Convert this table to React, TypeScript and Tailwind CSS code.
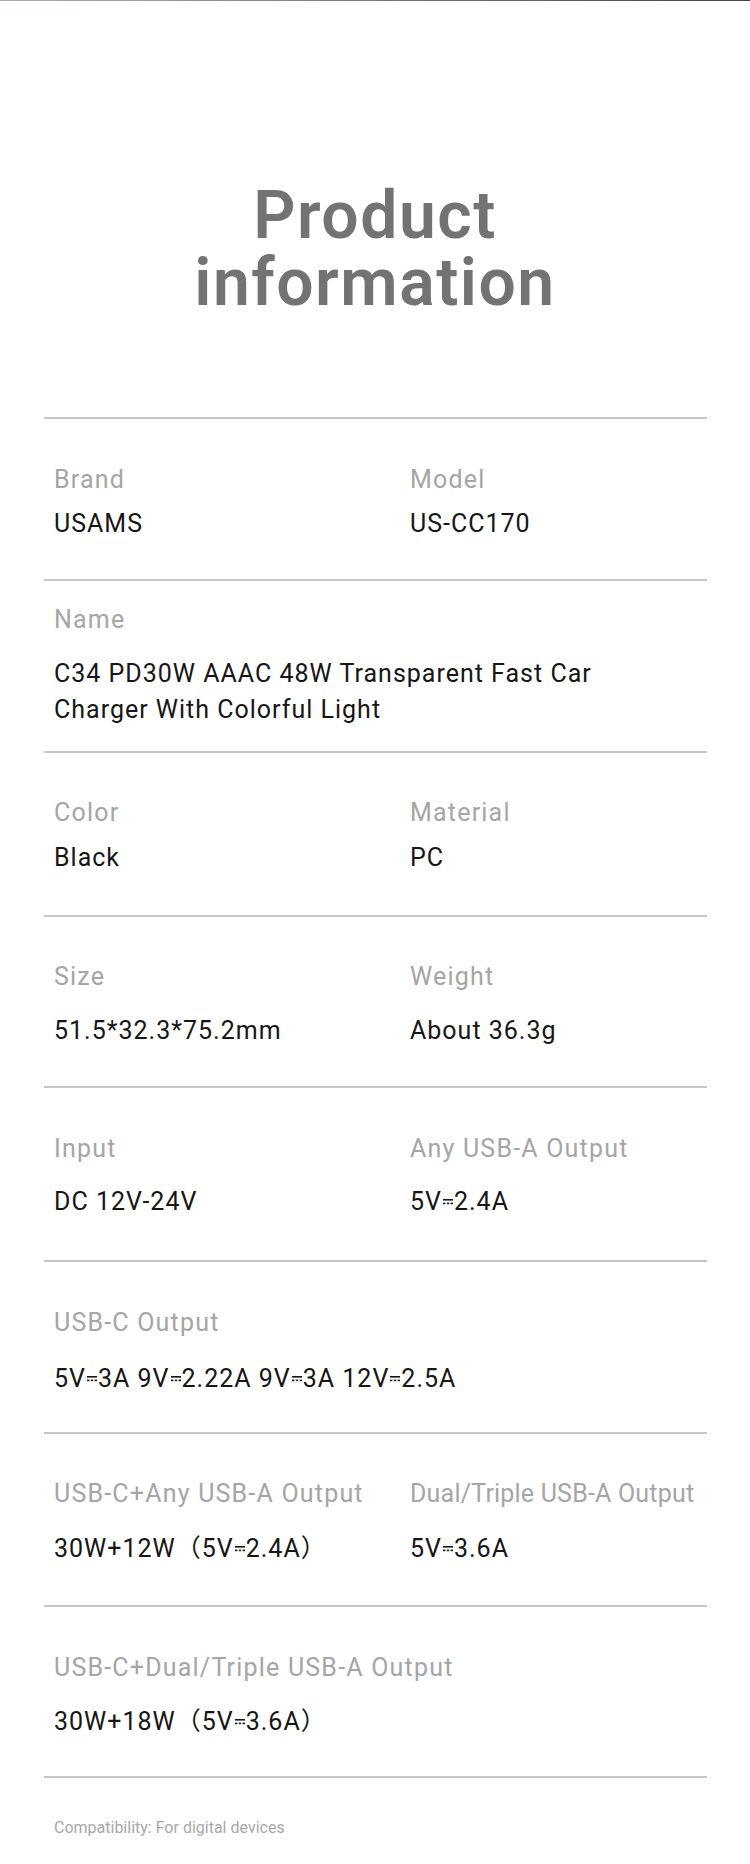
import React from "react";

const DC = () => (
  <svg
    width="10"
    height="6"
    viewBox="0 0 10 6"
    className="inline-block mx-[1px] align-[5px]"
  >
    <rect x="0" y="0" width="10" height="1.6" fill="currentColor" />
    <rect x="0" y="3.6" width="2.4" height="1.6" fill="currentColor" />
    <rect x="3.8" y="3.6" width="2.4" height="1.6" fill="currentColor" />
    <rect x="7.6" y="3.6" width="2.4" height="1.6" fill="currentColor" />
  </svg>
);

const Line = () => <div className="h-[2px] bg-[#c6c6c6]" />;

const Label = ({ children }: { children: React.ReactNode }) => (
  <div className="text-[25px] leading-[30px] text-[#a5a5a5] whitespace-nowrap tracking-[1.2px]">{children}</div>
);

const Value = ({ children }: { children: React.ReactNode }) => (
  <div className="text-[25px] leading-[30px] text-[#161616] whitespace-nowrap tracking-[1px]">{children}</div>
);

export default function App() {
  return (
    <div
      className="w-[750px] h-[1864px] bg-white overflow-hidden"
      style={{ fontFamily: "Roboto, 'Noto Sans CJK SC', sans-serif" }}
    >
      <div className="h-px bg-linear-to-r from-[#a7afbf] to-[#44444c]" />

      <h1 className="mt-[181px] text-center text-[66px] leading-[67px] font-semibold text-[#737373] tracking-[1.5px]">
        Product
        <br />
        information
      </h1>

      <div className="mt-[101px] ml-[44px] mr-[43px]">
        <Line />

        {/* Brand / Model */}
        <div className="grid grid-cols-[356px_1fr] pl-[10px] pt-[46px] pb-[40px]">
          <div className="flex flex-col gap-[14px]">
            <Label>Brand</Label>
            <Value>USAMS</Value>
          </div>
          <div className="flex flex-col gap-[14px]">
            <Label>Model</Label>
            <Value>US-CC170</Value>
          </div>
        </div>
        <Line />

        {/* Name */}
        <div className="pl-[10px] pt-[24px] pb-[23px] flex flex-col gap-[21px]">
          <Label>Name</Label>
          <div className="text-[25px] leading-[36px] text-[#161616] tracking-[1px] whitespace-nowrap">
            C34 PD30W AAAC 48W Transparent Fast Car
            <br />
            Charger With Colorful Light
          </div>
        </div>
        <Line />

        {/* Color / Material */}
        <div className="grid grid-cols-[356px_1fr] pl-[10px] pt-[45px] pb-[42px]">
          <div className="flex flex-col gap-[15px]">
            <Label>Color</Label>
            <Value>Black</Value>
          </div>
          <div className="flex flex-col gap-[15px]">
            <Label>Material</Label>
            <Value>PC</Value>
          </div>
        </div>
        <Line />

        {/* Size / Weight */}
        <div className="grid grid-cols-[356px_1fr] pl-[10px] pt-[45px] pb-[40px]">
          <div className="flex flex-col gap-[24px]">
            <Label>Size</Label>
            <Value>51.5*32.3*75.2mm</Value>
          </div>
          <div className="flex flex-col gap-[24px]">
            <Label>Weight</Label>
            <Value>About 36.3g</Value>
          </div>
        </div>
        <Line />

        {/* Input / Any USB-A */}
        <div className="grid grid-cols-[356px_1fr] pl-[10px] pt-[46px] pb-[43px]">
          <div className="flex flex-col gap-[23px]">
            <Label>Input</Label>
            <Value>DC 12V-24V</Value>
          </div>
          <div className="flex flex-col gap-[23px]">
            <Label>Any USB-A Output</Label>
            <Value>
              5V<DC />2.4A
            </Value>
          </div>
        </div>
        <Line />

        {/* USB-C Output */}
        <div className="pl-[10px] pt-[46px] pb-[38px] flex flex-col gap-[26px]">
          <Label>USB-C Output</Label>
          <Value>
            5V<DC />3A 9V<DC />2.22A 9V<DC />3A 12V<DC />2.5A
          </Value>
        </div>
        <Line />

        {/* USB-C + Any USB-A / Dual Triple */}
        <div className="grid grid-cols-[356px_1fr] pl-[10px] pt-[45px] pb-[41px]">
          <div className="flex flex-col gap-[25px]">
            <Label>USB-C+Any USB-A Output</Label>
            <Value>
              30W+12W（5V<DC />2.4A）
            </Value>
          </div>
          <div className="flex flex-col gap-[25px]">
            <div className="text-[25px] leading-[30px] text-[#a5a5a5] whitespace-nowrap tracking-[0.2px]">
              Dual/Triple USB-A Output
            </div>
            <Value>
              5V<DC />3.6A
            </Value>
          </div>
        </div>
        <Line />

        {/* USB-C + Dual/Triple */}
        <div className="pl-[10px] pt-[46px] pb-[39px] flex flex-col gap-[24px]">
          <Label>USB-C+Dual/Triple USB-A Output</Label>
          <Value>
            30W+18W（5V<DC />3.6A）
          </Value>
        </div>
        <Line />

        <div className="pl-[10px] pt-[40px] text-[16px] leading-[20px] text-[#a8a8a8]">
          Compatibility: For digital devices
        </div>
      </div>
    </div>
  );
}
